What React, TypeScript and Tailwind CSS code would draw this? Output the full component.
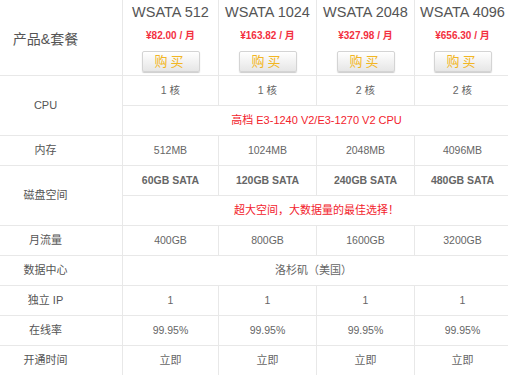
const plans = [
  { name: "WSATA 512", price: "¥82.00", cpu: "1 核", ram: "512MB", disk: "60GB SATA", bw: "400GB" },
  { name: "WSATA 1024", price: "¥163.82", cpu: "1 核", ram: "1024MB", disk: "120GB SATA", bw: "800GB" },
  { name: "WSATA 2048", price: "¥327.98", cpu: "2 核", ram: "2048MB", disk: "240GB SATA", bw: "1600GB" },
  { name: "WSATA 4096", price: "¥656.30", cpu: "2 核", ram: "4096MB", disk: "480GB SATA", bw: "3200GB" },
];

const cell = "flex items-center justify-center border-b border-r border-[#e8e8e8] text-[10.5px] text-[#666]";
const label = "flex items-center justify-center border-b border-r border-[#e8e8e8] pr-[31px] text-[11px] text-[#555]";

export default function App() {
  return (
    <div
      className="h-[375px] w-[508px] overflow-hidden bg-white"
      style={{ fontFamily: '"Liberation Sans", Arial, "Noto Sans CJK SC", sans-serif' }}
    >
      <div className="grid w-[511px] grid-cols-[123px_96px_98px_98px_96px] grid-rows-[76px_repeat(10,30px)]">
        <div className="flex items-center justify-center border-b border-r border-[#e8e8e8] pr-[31px] pt-[3px] text-[14px] text-[#555]">
          产品&amp;套餐
        </div>
        {plans.map((p) => (
          <div key={p.name} className="flex flex-col items-center border-b border-r border-[#e8e8e8] pt-[3px]">
            <div className="text-[14.5px] leading-[18px] text-[#555]">{p.name}</div>
            <div className="mt-[8px] text-[10px] font-bold leading-[14px] text-[#f3303f]">
              {p.price} / 月
            </div>
            <button className="mt-[8px] flex h-[21px] w-[58px] items-center justify-center rounded-[2px] border border-[#d4d4d4] bg-gradient-to-b from-white to-[#e6e6e6] text-[13px] tracking-[3px] text-[#f2b623] shadow-[0_1px_1px_#ccc]">
              购买
            </button>
          </div>
        ))}

        <div className={`${label} row-span-2`}>CPU</div>
        {plans.map((p) => (
          <div key={p.name + "cpu"} className={cell}>{p.cpu}</div>
        ))}
        <div className={`${cell} col-span-4 text-[11px] text-[#f2232d]`}>高档 E3-1240 V2/E3-1270 V2 CPU</div>

        <div className={label}>内存</div>
        {plans.map((p) => (
          <div key={p.name + "ram"} className={cell}>{p.ram}</div>
        ))}

        <div className={`${label} row-span-2`}>磁盘空间</div>
        {plans.map((p) => (
          <div key={p.name + "disk"} className={`${cell} font-bold text-[#222]`}>{p.disk}</div>
        ))}
        <div className={`${cell} col-span-4 text-[11px] text-[#f2232d]`}>超大空间，大数据量的最佳选择！</div>

        <div className={label}>月流量</div>
        {plans.map((p) => (
          <div key={p.name + "bw"} className={cell}>{p.bw}</div>
        ))}

        <div className={label}>数据中心</div>
        <div className={`${cell} col-span-4 pr-[6px] text-[11px] text-[#555]`}>洛杉矶（美国）</div>

        <div className={label}>独立 IP</div>
        {plans.map((p) => (
          <div key={p.name + "ip"} className={cell}>1</div>
        ))}

        <div className={label}>在线率</div>
        {plans.map((p) => (
          <div key={p.name + "up"} className={cell}>99.95%</div>
        ))}

        <div className={label}>开通时间</div>
        {plans.map((p) => (
          <div key={p.name + "open"} className={`${cell} text-[11px]`}>立即</div>
        ))}
      </div>
    </div>
  );
}
